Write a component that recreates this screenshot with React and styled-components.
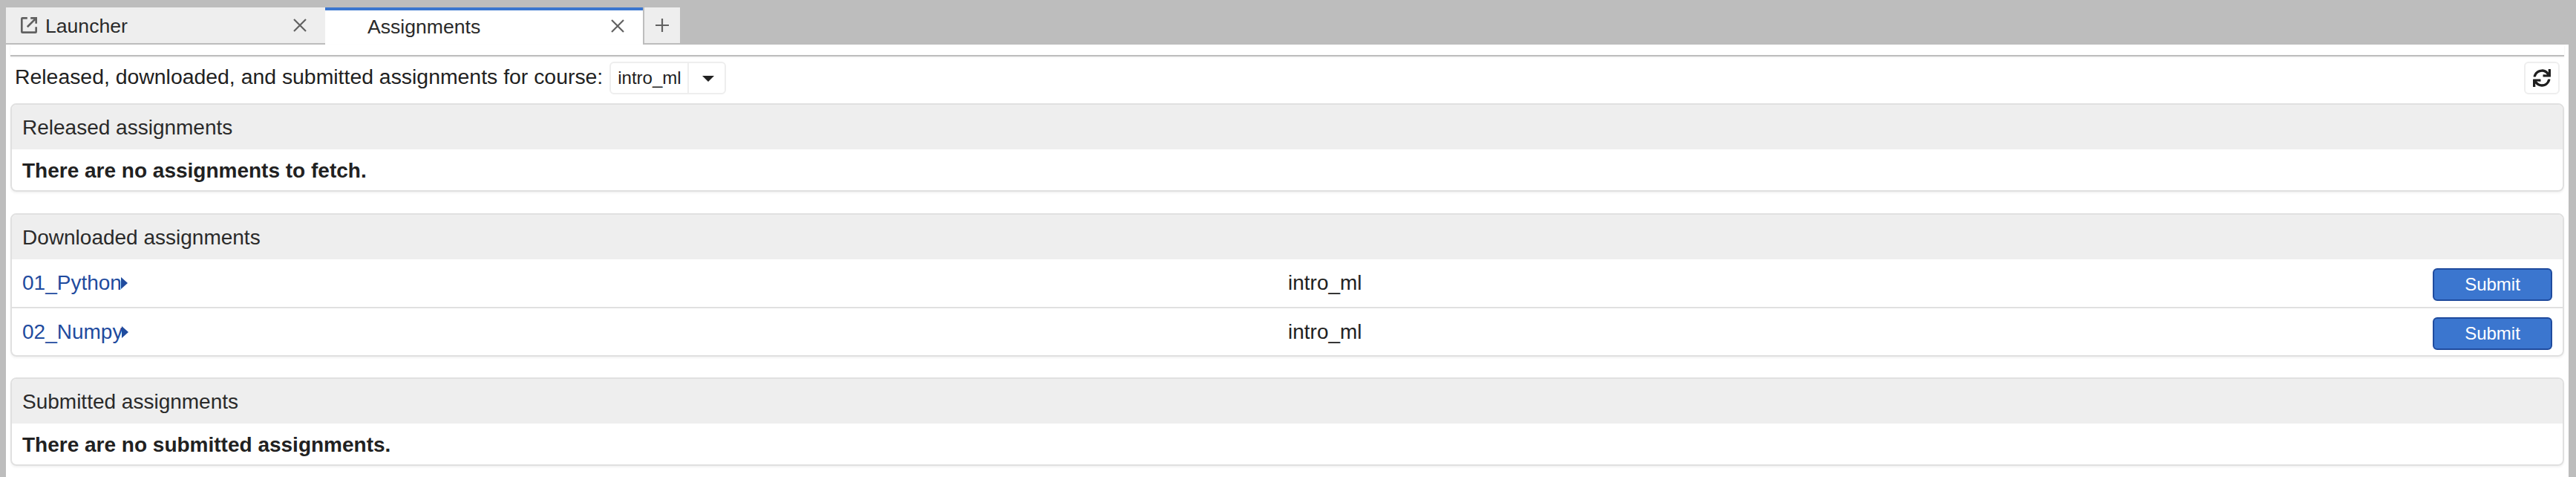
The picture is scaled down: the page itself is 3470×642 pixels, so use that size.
import React from "react";
import styled, { createGlobalStyle } from "styled-components";
import { FaSync } from "react-icons/fa";

const Global = createGlobalStyle`
  html, body { margin: 0; padding: 0; background: #bdbdbd; }
  body { font-family: "Liberation Sans", Arial, sans-serif; color: #212121; }
`;

const Page = styled.div`
  width: 3470px;
  height: 642px;
  overflow: hidden;
  box-sizing: border-box;
  padding: 10px 10px 0 8px;
  display: flex;
  flex-direction: column;
`;

const TabBar = styled.div`
  display: flex;
  height: 50px;
  flex: none;
  align-items: flex-start;
`;

const Tab = styled.div`
  box-sizing: border-box;
  width: ${(p) => (p.$active ? "428px" : "430px")};
  height: ${(p) => (p.$active ? "50px" : "48px")};
  background: ${(p) => (p.$active ? "#fff" : "#eeeeee")};
  border-top: ${(p) => (p.$active ? "4px solid #3b76cf" : "none")};
  display: flex;
  align-items: center;
  padding: ${(p) => (p.$active ? "0 24px 4px 57px" : "0 24px 0 20px")};
  font-size: 26.6px;
  margin-right: ${(p) => (p.$active ? "2px" : "0")};
`;

const TabLabel = styled.span`
  flex: 1;
  white-space: nowrap;
  color: #2a2a2a;
  padding-top: 2px;
`;

const TabIcon = styled.svg`
  width: 22px;
  height: 22px;
  margin-right: 11px;
  flex: none;
`;

const CloseIcon = styled.svg`
  width: 20px;
  height: 20px;
  flex: none;
`;

const AddTab = styled.div`
  width: 48px;
  height: 48px;
  background: #eeeeee;
  display: flex;
  align-items: center;
  justify-content: center;
`;

const Content = styled.div`
  flex: 1;
  background: #fff;
  padding: 0 6px;
  display: flex;
  flex-direction: column;
`;

const Strip = styled.div`
  height: 14px;
  flex: none;
  border-bottom: 2px solid #bdbdbd;
  box-shadow: 0 1px 2px rgba(0, 0, 0, 0.08);
`;

const Toolbar = styled.div`
  display: flex;
  align-items: center;
  height: 44px;
  margin: 7px 6px 12px 6px;
  font-size: 28.4px;
  flex: none;
`;

const Prompt = styled.span`
  white-space: nowrap;
  margin-right: 9px;
  position: relative;
  top: -2px;
`;

const Select = styled.div`
  box-sizing: border-box;
  width: 157px;
  height: 44px;
  border: 2px solid #eeeeee;
  border-radius: 6px;
  display: flex;
  align-items: center;
  font-size: 24px;
`;

const SelectValue = styled.span`
  width: 105px;
  box-sizing: border-box;
  padding-left: 9px;
  height: 100%;
  display: flex;
  align-items: center;
  border-right: 2px solid #eeeeee;
`;

const Caret = styled.span`
  width: 0;
  height: 0;
  margin-left: 18px;
  margin-top: 2px;
  border-left: 8px solid transparent;
  border-right: 8px solid transparent;
  border-top: 8px solid #212121;
`;

const RefreshButton = styled.div`
  box-sizing: border-box;
  margin-left: auto;
  width: 48px;
  height: 44px;
  border: 2px solid #eeeeee;
  border-radius: 6px;
  display: flex;
  align-items: center;
  justify-content: center;
  font-size: 24px;
  color: #1f1f1f;
`;

const Card = styled.section`
  box-sizing: border-box;
  border: 2px solid #e0e0e0;
  border-radius: 8px;
  box-shadow: 0 2px 3px rgba(0, 0, 0, 0.05);
  margin-bottom: ${(p) => p.$gap}px;
  overflow: hidden;
  flex: none;
`;

const CardHeader = styled.div`
  box-sizing: border-box;
  height: 60px;
  background: #eeeeee;
  padding: 2px 14px 0;
  display: flex;
  align-items: center;
  font-size: 28px;
  color: #2a2a2a;
`;

const EmptyMessage = styled.div`
  box-sizing: border-box;
  height: 55px;
  padding: 2px 14px 0;
  display: flex;
  align-items: center;
  font-size: 28px;
  font-weight: 700;
`;

const Row = styled.div`
  display: flex;
  align-items: center;
  box-sizing: border-box;
  height: ${(p) => (p.$divided ? "65px" : "64px")};
  padding: 0 14px;
  font-size: 28px;
  border-top: ${(p) => (p.$divided ? "2px solid #e0e0e0" : "none")};
`;

const RowName = styled.a`
  color: #1f4b9e;
  width: 1705px;
  flex: none;
  display: flex;
  align-items: center;
`;

const Arrow = styled.span`
  width: 0;
  height: 0;
  flex: none;
  margin-left: -1px;
  border-top: 8px solid transparent;
  border-bottom: 8px solid transparent;
  border-left: 9px solid #1f4b9e;
`;

const RowCourse = styled.span`
  flex: 1;
`;

const SubmitButton = styled.button`
  box-sizing: border-box;
  width: 161px;
  height: 44px;
  margin-top: 4px;
  background: #3b76cf;
  border: 2px solid #1f4b9e;
  border-radius: 6px;
  color: #fff;
  font: 24px "Liberation Sans", Arial, sans-serif;
  padding: 0;
`;

const Close = () => (
  <CloseIcon viewBox="0 0 20 20">
    <path d="M2 2 L18 18 M18 2 L2 18" stroke="#616161" strokeWidth="2.2" fill="none" />
  </CloseIcon>
);

const assignments = ["01_Python", "02_Numpy"];

export default function App() {
  return (
    <Page>
      <Global />
      <TabBar>
        <Tab>
          <TabIcon viewBox="1 1 20 20">
            <path d="M9 2.2 H3 Q2.2 2.2 2.2 3 V19 Q2.2 19.8 3 19.8 H19 Q19.8 19.8 19.8 19 V13 M13 2.2 H19.8 V9 M19.8 2.2 L9 13" stroke="#616161" strokeWidth="2.4" fill="none" />
          </TabIcon>
          <TabLabel>Launcher</TabLabel>
          <Close />
        </Tab>
        <Tab $active>
          <TabLabel>Assignments</TabLabel>
          <Close />
        </Tab>
        <AddTab>
          <svg width="20" height="20" viewBox="0 0 20 20">
            <path d="M10 1 V19 M1 10 H19" stroke="#616161" strokeWidth="2.2" fill="none" />
          </svg>
        </AddTab>
      </TabBar>
      <Content>
        <Strip />
        <Toolbar>
          <Prompt>Released, downloaded, and submitted assignments for course:</Prompt>
          <Select>
            <SelectValue>intro_ml</SelectValue>
            <Caret />
          </Select>
          <RefreshButton>
            <FaSync />
          </RefreshButton>
        </Toolbar>
        <Card $gap={29}>
          <CardHeader>Released assignments</CardHeader>
          <EmptyMessage>There are no assignments to fetch.</EmptyMessage>
        </Card>
        <Card $gap={28}>
          <CardHeader>Downloaded assignments</CardHeader>
          {assignments.map((name, i) => (
            <Row key={name} $divided={i > 0}>
              <RowName>
                {name}
                <Arrow />
              </RowName>
              <RowCourse>intro_ml</RowCourse>
              <SubmitButton>Submit</SubmitButton>
            </Row>
          ))}
        </Card>
        <Card $gap={0}>
          <CardHeader>Submitted assignments</CardHeader>
          <EmptyMessage>There are no submitted assignments.</EmptyMessage>
        </Card>
      </Content>
    </Page>
  );
}
